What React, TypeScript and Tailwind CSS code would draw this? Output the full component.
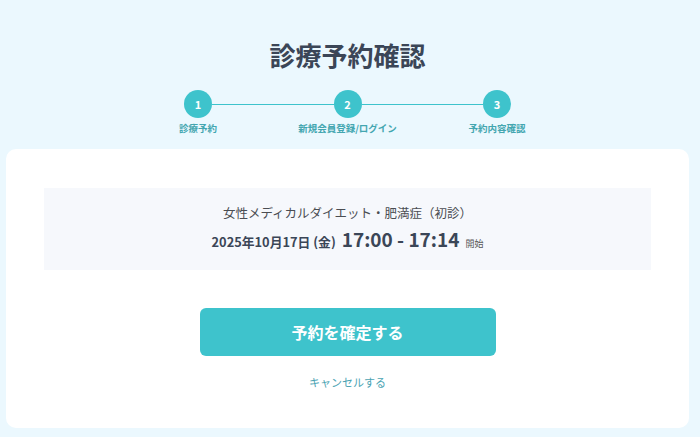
import React from "react";

const font = { fontFamily: '"Noto Sans CJK JP", "Noto Sans", sans-serif' };

function Circle({ n }: { n: number }) {
  return (
    <div className="flex h-[28px] w-[28px] shrink-0 items-center justify-center rounded-full bg-[#3ec3cc] text-[11px] font-bold text-white">
      {n}
    </div>
  );
}

export default function App() {
  return (
    <div className="min-h-[437px] w-full bg-[#ebf8fe] pt-[37px]" style={font}>
      <div className="ml-[6px] w-[683px]">
        <h1 className="text-center text-[26px] font-bold leading-[36px] text-[#3b4657]">
          診療予約確認
        </h1>
        <div className="mx-auto mt-[17px] flex w-[327px] items-center">
          <Circle n={1} />
          <div className="h-px flex-1 bg-[#3ec3cc]" />
          <Circle n={2} />
          <div className="h-px flex-1 bg-[#3ec3cc]" />
          <Circle n={3} />
        </div>
        <div className="mx-auto mt-[3px] flex w-[419px] justify-between">
          <div className="w-[120px] text-center text-[9.5px] font-bold leading-[14px] text-[#43a6b0]">
            診療予約
          </div>
          <div className="w-[120px] text-center text-[9.5px] font-bold leading-[14px] text-[#43a6b0]">
            新規会員登録/ログイン
          </div>
          <div className="w-[120px] text-center text-[9.5px] font-bold leading-[14px] text-[#43a6b0]">
            予約内容確認
          </div>
        </div>
        <div className="mt-[14px] rounded-[10px] bg-white px-[38px] pb-[38px] pt-[39px]">
          <div className="flex h-[82px] flex-col items-center justify-center bg-[#f6f8fc] pb-[2px]">
            <div className="text-[12.5px] leading-[18px] text-[#4a4d52]">
              女性メディカルダイエット・肥満症（初診）
            </div>
            <div className="mt-[5px] flex items-baseline text-[#3b4657]">
              <span className="text-[12.8px] font-bold">2025年10月17日 (金)</span>
              <span className="ml-[6px] text-[19px] font-bold leading-[24px]">17:00 - 17:14</span>
              <span className="ml-[6px] text-[9px] text-[#555]">開始</span>
            </div>
          </div>
          <div className="mt-[38px] flex justify-center">
            <button className="flex h-[48px] w-[296px] items-center justify-center rounded-[6px] bg-[#3ec3cc] text-[16px] font-bold text-white">
              予約を確定する
            </button>
          </div>
          <div className="mt-[18px] text-center text-[11px] leading-[16px] text-[#4ba3b3]">
            キャンセルする
          </div>
        </div>
      </div>
    </div>
  );
}
